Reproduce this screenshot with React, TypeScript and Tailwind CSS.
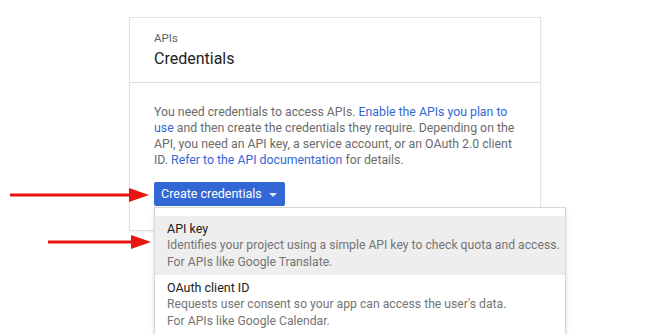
import React from 'react';

const Arrow: React.FC<{ className: string; width: number }> = ({ className, width }) => (
  <svg className={className} width={width} height="14" viewBox={`0 0 ${width} 14`}>
    <line x1="0" y1="7" x2={width - 18} y2="7" stroke="#e8140f" strokeWidth="3" />
    <polygon points={`${width - 20},0 ${width},7 ${width - 20},14`} fill="#e8140f" />
  </svg>
);

export default function App() {
  return (
    <div className="relative h-[334px] w-[666px] overflow-hidden bg-white font-['Roboto',sans-serif]">
      <div className="ml-[129px] mt-[17px] w-[412px] border border-[#e3e3e3] bg-white shadow-[0_1px_2px_rgba(0,0,0,0.08)]">
        <div className="h-[65px] border-b border-[#dcdcdc] px-6 pt-[13px]">
          <div className="text-[11.5px] leading-[14px] text-[#5f5f5f]">APIs</div>
          <div className="mt-[4px] text-[16px] leading-[20px] text-[#212121]">Credentials</div>
        </div>
        <div className="px-6 pb-6 pt-[21px]">
          <p className="text-[12.3px] leading-4 text-[#6b6b6b]">
            You need credentials to access APIs.{' '}
            <span className="text-[#3367d6]">Enable the APIs you plan to use</span> and then create the
            credentials they require. Depending on the API, you need an API key, a service account, or an
            OAuth 2.0 client ID. <span className="text-[#3367d6]">Refer to the API documentation</span> for
            details.
          </p>
          <button className="mt-[14px] flex h-[24px] w-[131px] items-center gap-[6px] rounded-[2px] bg-[#3367d6] pl-[7px] text-[12.5px] text-white">
            Create credentials
            <svg width="10" height="6" viewBox="0 0 10 6" className="mt-[1px]">
              <polygon points="1,1 9,1 5,5" fill="#dfe7fa" />
            </svg>
          </button>
        </div>
      </div>

      <div className="absolute left-[154px] top-[207px] w-[412px] border border-[#d6d6d6] bg-white pb-6 pt-[8px] shadow-[0_2px_4px_rgba(0,0,0,0.15)]">
        <div className="whitespace-nowrap bg-[#eeeeee] px-3 py-[4px]">
          <div className="text-[12.5px] leading-[17px] text-[#212121]">API key</div>
          <div className="text-[12.2px] leading-[17px] text-[#757575]">
            Identifies your project using a simple API key to check quota and access.
          </div>
          <div className="text-[12.2px] leading-[17px] text-[#757575]">For APIs like Google Translate.</div>
        </div>
        <div className="whitespace-nowrap px-3 py-[4px]">
          <div className="text-[12.5px] leading-[17px] text-[#212121]">OAuth client ID</div>
          <div className="text-[12.2px] leading-[17px] text-[#757575]">
            Requests user consent so your app can access the user's data.
          </div>
          <div className="text-[12.2px] leading-[17px] text-[#757575]">For APIs like Google Calendar.</div>
        </div>
      </div>

      <Arrow className="absolute left-[10px] top-[188px]" width={139} />
      <Arrow className="absolute left-[48px] top-[235px]" width={103} />
    </div>
  );
}
